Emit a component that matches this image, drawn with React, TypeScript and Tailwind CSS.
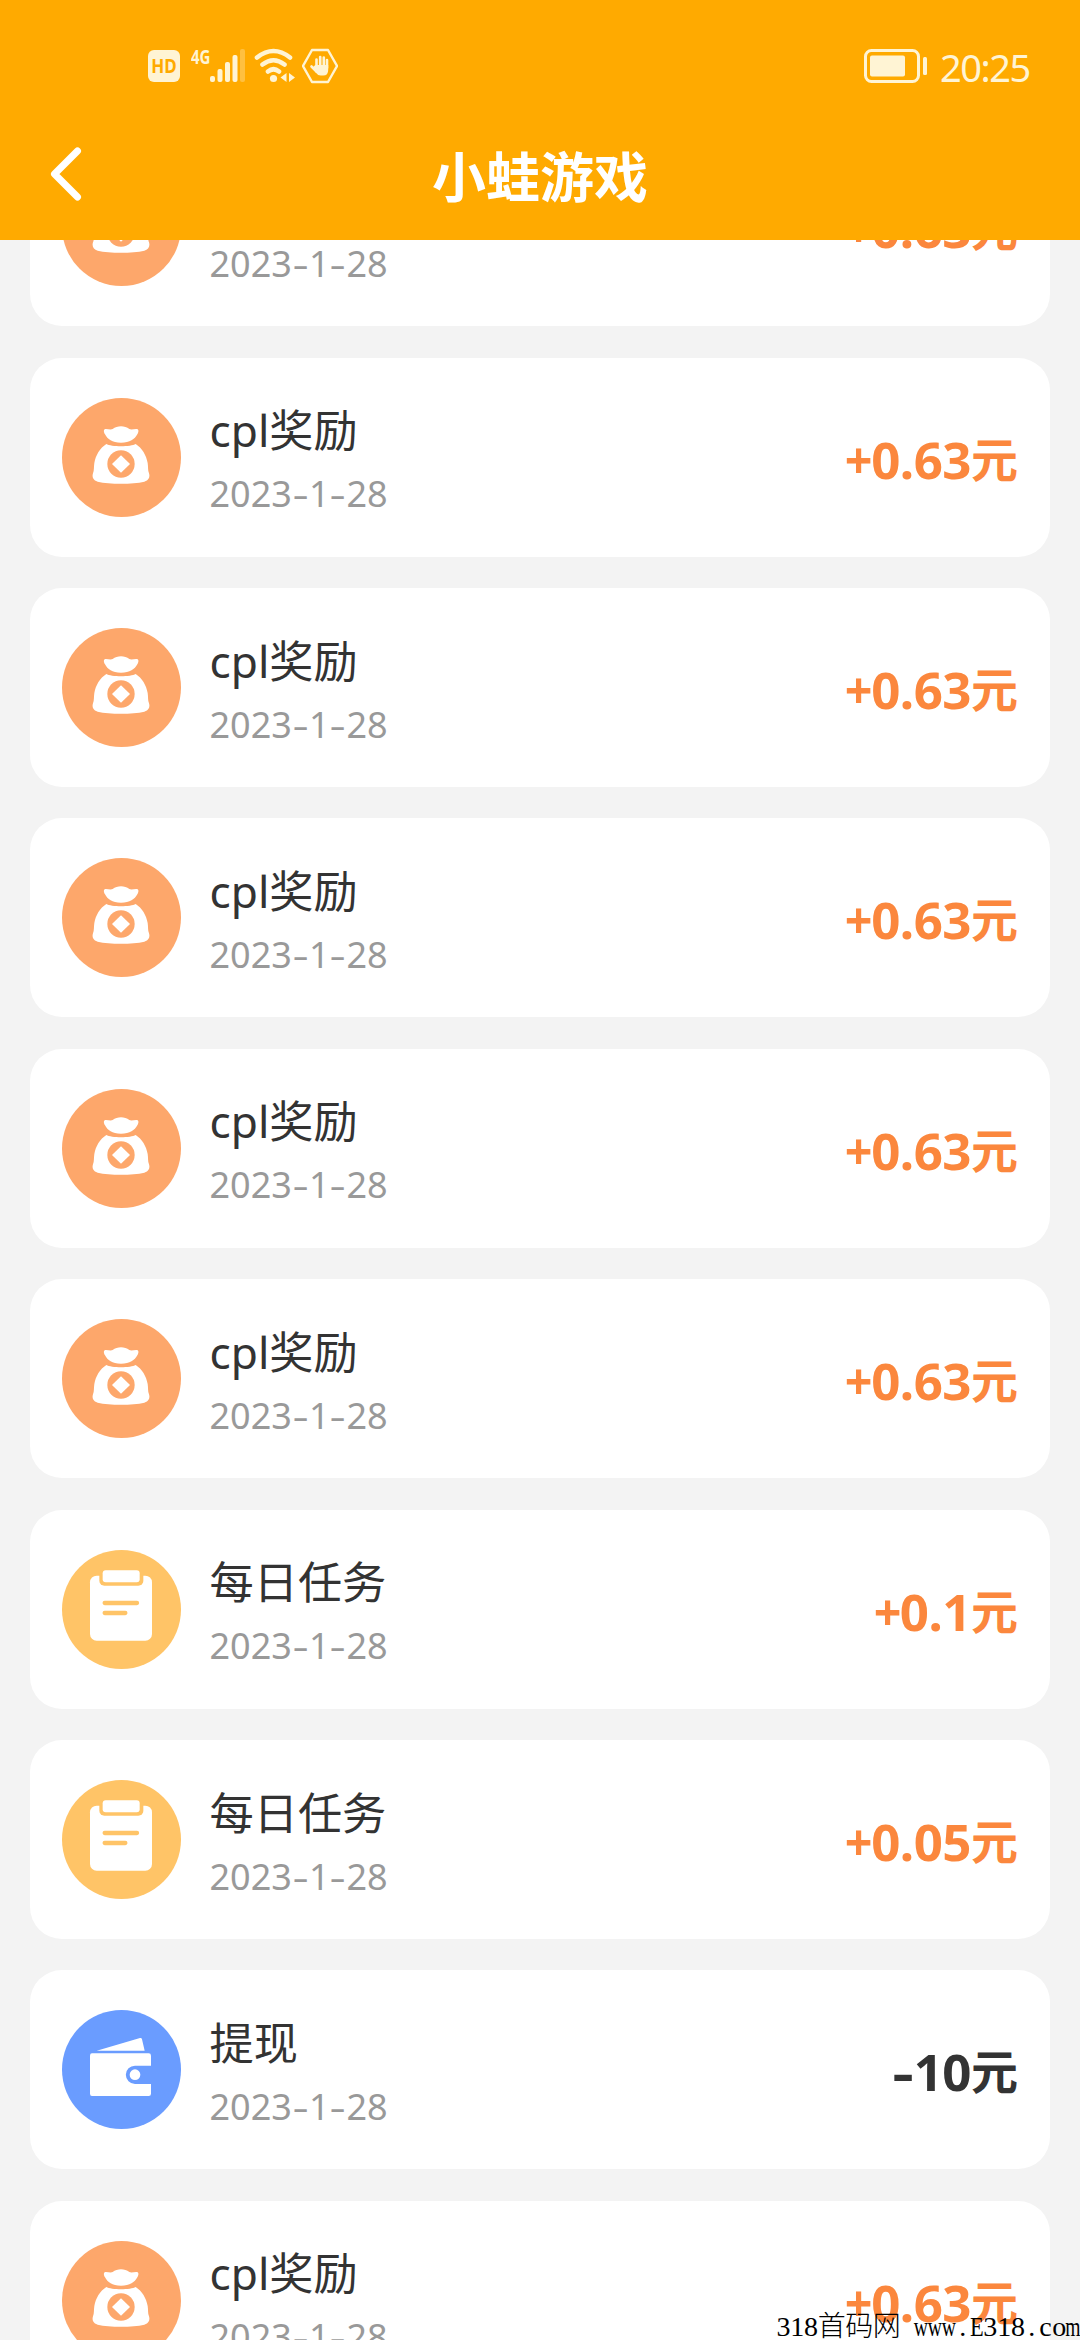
import type { ReactNode } from "react";
import clsx from "clsx";

type Kind = "bag" | "task" | "wallet";

type Entry = {
  kind: Kind;
  title: string;
  date: string;
  amount: string;
};

const reward: Entry = {
  kind: "bag",
  title: "cpl奖励",
  date: "2023-1-28",
  amount: "+0.63",
};

const entries: Entry[] = [
  reward,
  reward,
  reward,
  reward,
  reward,
  reward,
  { kind: "task", title: "每日任务", date: "2023-1-28", amount: "+0.1" },
  { kind: "task", title: "每日任务", date: "2023-1-28", amount: "+0.05" },
  { kind: "wallet", title: "提现", date: "2023-1-28", amount: "-10" },
  reward,
];

function BagIcon() {
  return (
    <>
      <circle cx="178.5" cy="178.5" r="178.5" fill="#fda76b" />
      <path
        d="M130 93c6-1 16 3 22 0 7-5 16-8 25-8s18 3 25 8c6 3 16-1 23 0 6 2 5 9 1 16-8 15-22 25-49 25s-40-10-48-25c-4-7-5-14 1-16z"
        fill="#fff"
      />
      <path
        d="M133 138c14 9 74 9 88 0 19 12 32 34 36 57 2 12 0 22 4 31 4 12-2 22-14 25-36 8-104 8-140 0-12-3-18-13-14-25 4-9 2-19 4-31 4-23 17-45 36-57z"
        fill="#fff"
      />
      <circle cx="177" cy="198" r="41" fill="#fda76b" />
      <path d="M177 172l27 26-27 26-27-26z" fill="#fff" />
    </>
  );
}

function TaskIcon() {
  return (
    <>
      <circle cx="178.5" cy="178.5" r="178.5" fill="#ffc467" />
      <rect x="84" y="77" width="186" height="195" rx="20" fill="#fff" />
      <path d="M112 70h132v22a15 15 0 0 1-15 15H127a15 15 0 0 1-15-15z" fill="#ffc467" />
      <rect x="122" y="61" width="111" height="36" rx="9" fill="#fff" />
      <path d="M128 159h97M128 189h62" stroke="#ffc467" strokeWidth="13" strokeLinecap="round" />
    </>
  );
}

function WalletIcon() {
  return (
    <>
      <circle cx="178.5" cy="178.5" r="178.5" fill="#6a9cff" />
      <path d="M104 122L234 84q5-1 6 4l8 34z" fill="#fff" />
      <path
        d="M90 130h170q7 0 7 7v30h-48a27 27 0 0 0 0 55h48v29q0 7-7 7H90q-6 0-6-7V137q0-7 6-7z"
        fill="#fff"
      />
      <circle cx="219" cy="194" r="16" fill="#fff" />
    </>
  );
}

const icons: Record<Kind, ReactNode> = {
  bag: <BagIcon />,
  task: <TaskIcon />,
  wallet: <WalletIcon />,
};

function EntryDate({ value }: { value: string }) {
  return (
    <div className="flex h-[40px] items-center text-[36px] leading-[40px] text-[#999]">
      {value.split("-").map((part, i) => (
        <span key={i} className="flex">
          {i > 0 && <span className="w-[17px] scale-x-140 text-center">-</span>}
          {part}
        </span>
      ))}
    </div>
  );
}

function Amount({ value }: { value: string }) {
  const negative = value.startsWith("-");

  return (
    <div
      className={clsx(
        "flex items-baseline pt-[5px] text-[51px] leading-[60px] font-bold",
        negative ? "text-[#333]" : "text-[#fb873d]",
      )}
    >
      <span className={clsx("text-center", negative ? "w-[22px] scale-x-130" : "w-[27px] scale-x-95")}>
        {value[0]}
      </span>
      <span className="tracking-[-0.500px]">{value.slice(1)}</span>
      <span className="mb-[2px] self-end text-[47px] leading-[60px]">元</span>
    </div>
  );
}

function EntryCard({ entry }: { entry: Entry }) {
  return (
    <li className="flex h-[199px] shrink-0 items-center rounded-[32px] bg-white px-[32px]">
      <svg viewBox="0 0 357 357" className="size-[119px] shrink-0">
        {icons[entry.kind]}
      </svg>
      <div className="ml-[28.500px] flex-1 pt-[5px]">
        <div className="mb-[19px] h-[50px] text-[44.200px] leading-[50px] text-[#333]">
          {entry.title}
        </div>
        <EntryDate value={entry.date} />
      </div>
      <Amount value={entry.amount} />
    </li>
  );
}

function StatusBar() {
  return (
    <div className="flex h-[132px] items-center pr-[50px] pl-[148px] text-[#fff4d4]">
      <div className="flex size-[32px] items-center justify-center rounded-[6px] bg-[#fff4d4] text-[#ffaa00]">
        <span className="scale-x-85 text-[20px] leading-none font-bold">HD</span>
      </div>
      <div className="-mt-[18px] ml-[11px] w-[18px] origin-left scale-x-75 text-[20px] leading-none font-bold">
        4G
      </div>
      <svg viewBox="0 0 36 34" className="h-[34px] w-[36px]" fill="currentColor">
        <rect x="1" y="27" width="5" height="6" rx="2" />
        <rect x="8.5" y="20" width="5" height="13" rx="2" />
        <rect x="16" y="13" width="5" height="20" rx="2" />
        <rect x="23.5" y="6" width="5" height="27" rx="2" />
        <rect x="31" y="0" width="5" height="33" rx="2" opacity=".3" />
      </svg>
      <svg viewBox="0 0 42 36" className="ml-[9px] h-[36px] w-[42px]" fill="none" stroke="currentColor" strokeWidth="4.6" strokeLinecap="round">
        <path d="M3 9.500q16.500-13 33 0M8.500 16.500q11-8.500 22 0M14 23.500q5.500-4.500 11 0" />
        <circle cx="19.500" cy="30.500" r="3.600" fill="currentColor" stroke="none" />
        <path d="M32.500 25v9l-6-4.500zM35 25l6 4.500-6 4.500z" fill="currentColor" stroke="none" />
      </svg>
      <svg viewBox="0 0 36 36" className="ml-[6px] h-[36px] w-[36px]" fill="none" stroke="currentColor" strokeLinecap="round">
        <path d="M10 2h16l9 16-9 16H10L1 18z" strokeWidth="2.400" strokeLinejoin="round" />
        <path d="M14.500 11.500V20M18.200 9V20M21.800 9.500V20M25 12V20M9.500 18.500l5 5" strokeWidth="2.600" />
        <path d="M13.200 17h13v5q0 5.500-5 5.500h-2.500q-3 0-5-3l-3-5z" fill="currentColor" stroke="none" />
      </svg>
      <svg viewBox="0 0 64 34" className="ml-auto h-[34px] w-[64px]" fill="currentColor">
        <rect x="1.500" y="1.500" width="53" height="31" rx="6" fill="none" stroke="currentColor" strokeWidth="3" />
        <rect x="6" y="6.500" width="35" height="21" rx="2" />
        <rect x="59" y="8" width="4" height="18" rx="1.500" />
      </svg>
      <div className="ml-[12px] w-[90px] pt-[2px] text-[38px] leading-none tracking-[-1.500px] whitespace-nowrap">
        20:25
      </div>
    </div>
  );
}

function Header() {
  return (
    <header className="h-[240px] shrink-0 bg-[#ffaa00]">
      <StatusBar />
      <div className="flex h-[84px] items-center">
        <svg viewBox="0 0 32 56" className="ml-[50px] h-[56px] w-[32px]" fill="none" stroke="#fff" strokeWidth="7" strokeLinecap="round" strokeLinejoin="round">
          <path d="M27.500 5L4.500 28l23 23" />
        </svg>
        <h1 className="mr-[82px] flex-1 pt-[6px] text-center text-[54px] leading-[84px] font-bold text-white">
          小蛙游戏
        </h1>
      </div>
    </header>
  );
}

// Latin letters take half a CJK cell each
function Watermark() {
  return (
    <div className="absolute right-0 bottom-0 flex h-[27px] font-['Liberation_Serif','Noto_Sans_CJK_SC',serif] text-[28px] leading-[28px] text-black">
      {Array.from("318首码网 www.E318.com").map((char, i) => (
        <span
          key={i}
          className={clsx(
            "flex justify-center",
            char > "z" ? "w-[27.600px] font-light" : "w-[13.800px]",
            /[wm]/.test(char) && "scale-x-70",
            char === "E" && "scale-x-80",
          )}
        >
          {char}
        </span>
      ))}
    </div>
  );
}

export default function App() {
  return (
    <div className="relative flex h-[2340px] w-[1080px] flex-col overflow-hidden bg-[#f3f3f3] font-['Noto_Sans','Noto_Sans_CJK_SC',sans-serif]">
      <Header />
      <main className="min-h-0 flex-1 overflow-hidden px-[30px]">
        <ul className="-mt-[112.700px] flex flex-col gap-[31.400px]">
          {entries.map((entry, i) => (
            <EntryCard key={i} entry={entry} />
          ))}
        </ul>
      </main>
      <Watermark />
    </div>
  );
}
